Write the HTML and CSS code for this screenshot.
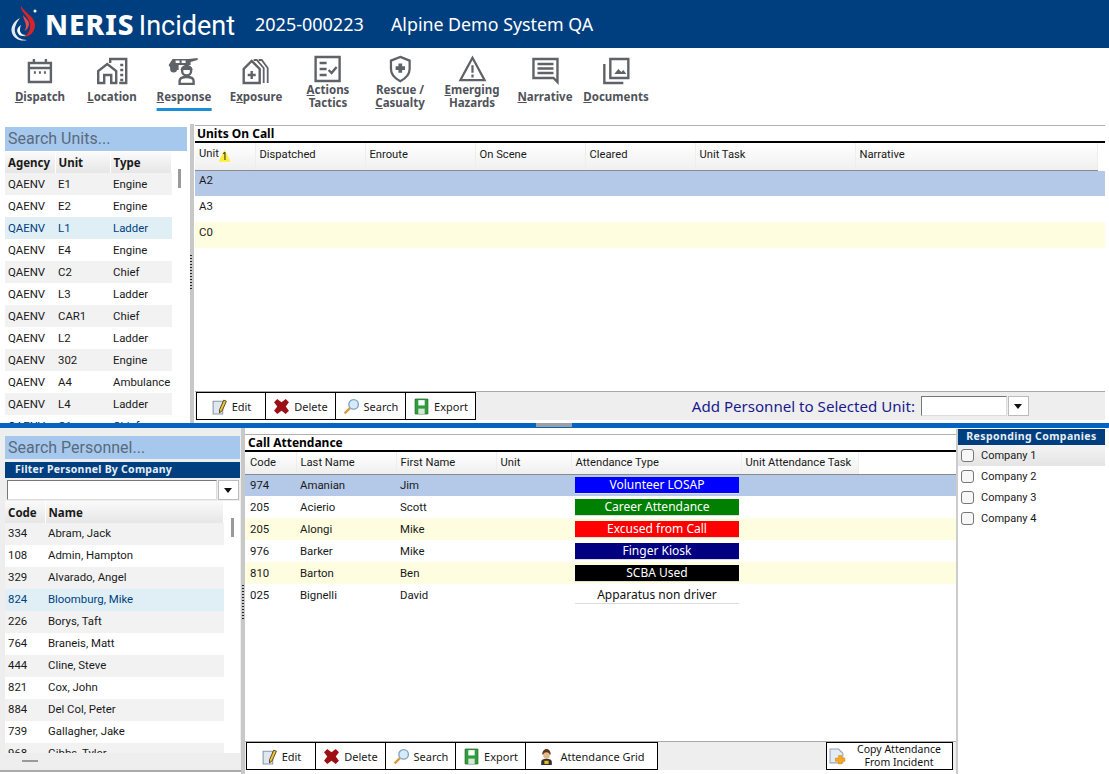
FILE: index.html
```html
<!DOCTYPE html>
<html lang="en">
<head>
    <meta charset="UTF-8">
    <title>NERIS Incident</title>
    <link rel="stylesheet" href="styles.css">
</head>
<body>
    <header class="topbar">
        <svg class="logo" viewBox="0 0 30 40" width="30" height="40">
            <path d="M11 2c-1 6 8 10 9 18 1 6-2 11-7 13 7 0 12-5 12-12C25 13 15 9 11 2z" fill="#d8232a"/>
            <path d="M13 11c0 4 3 7 3 11 0 2-1 4-2 5 3-1 5-4 5-7 0-4-4-6-6-9z" fill="#e8474c"/>
            <path d="M10 14C4 17 0 23 2 29c2 6 9 9 15 7-6 0-11-3-12-8-1-5 2-10 5-14z" fill="#e6e9ee"/>
            <path d="M11 21c-3 2-5 5-3 8 1 3 5 4 8 2-3 0-5-1-6-4 0-2 0-4 1-6z" fill="#fff"/>
            <circle cx="25" cy="7" r="1.500" fill="#fff"/>
        </svg>
        <span class="brand"><b>NERIS</b> <span class="brand-sub">Incident</span></span>
        <span class="incident-no">2025-000223</span>
        <span class="system-name">Alpine Demo System QA</span>
    </header>

    <nav class="tabs">
        <a class="tab tab-dispatch">
            <svg viewBox="0 0 28 28"><path d="M3 6h22v19H3z M3 11h22 M8 2v5 M20 2v5" class="ico"/><path d="M8 15.500h2M13 15.500h2M18 15.500h2" class="ico"/></svg>
            <span><u>D</u>ispatch</span>
        </a>
        <a class="tab tab-location">
            <svg class="icon-wide" viewBox="0 0 32 28"><path d="M2 26V14l9-7 9 7v12h-5v-8H8v8z" class="ico"/><path d="M14 6V2h16v24h-7" class="ico"/><path d="M24 8h3M24 13h3M24 18h3M24 23h3" class="ico"/></svg>
            <span><u>L</u>ocation</span>
        </a>
        <a class="tab tab-response active">
            <svg class="icon-wide" viewBox="0 0 32 28"><path d="M1 8l4-6h16l9-1v2l-7 2v3H11v5H4z" class="solid"/><circle cx="6" cy="12" r="3.500" class="solid"/><rect x="8" y="3.500" width="4" height="2.500" fill="#fff"/><rect x="14" y="3.500" width="4" height="2.500" fill="#fff"/><path d="M13 13c0-3 3-5 6-5s6 2 6 5z" class="solid"/><circle cx="19" cy="14" r="4.500" class="ico"/><path d="M12 27v-3c0-3 3-4 7-4s7 1 7 4v3z" class="ico"/></svg>
            <span><u>R</u>esponse</span>
        </a>
        <a class="tab tab-exposure">
            <svg viewBox="0 0 28 28"><path d="M2 26V12l8-8 8 8v14z" class="ico"/><path d="M10 14v8M6 18h8" class="ico"/><path d="M12 3h3l7 8v15M17 3h3l6 8v15" class="ico thin"/></svg>
            <span>E<u>x</u>posure</span>
        </a>
        <a class="tab tab-actions">
            <svg viewBox="0 0 28 28"><path d="M2 2h24v24H2z" class="ico"/><path d="M6 8h7M6 14h7M6 20h7" class="ico"/><path d="M15 15l3 3 5-6" class="ico"/></svg>
            <span><u>A</u>ctions<br>Tactics</span>
        </a>
        <a class="tab tab-rescue">
            <svg viewBox="0 0 26 30"><path d="M13 2l10 4v9c0 6-4 10-10 13C7 25 3 21 3 15V6z" class="ico"/><path d="M13 9v10M8 14h10" class="ico wide"/></svg>
            <span>Rescue /<br><u>C</u>asualty</span>
        </a>
        <a class="tab tab-hazards">
            <svg viewBox="0 0 30 28"><path d="M15 2L2 26h26z" class="ico"/><path d="M15 10v8M15 20v3" class="ico"/></svg>
            <span><u>E</u>merging<br>Hazards</span>
        </a>
        <a class="tab tab-narrative">
            <svg viewBox="0 0 28 28"><path d="M2 2h24v23l-4-4H2z" class="ico"/><path d="M6 7h16M6 11.500h16M6 16h16" class="ico"/></svg>
            <span><u>N</u>arrative</span>
        </a>
        <a class="tab tab-documents">
            <svg viewBox="0 0 28 28"><path d="M8 2h18v19H8z" class="ico"/><path d="M2 7v19h19" class="ico"/><path d="M12 17l4-5 3 3 2-2 3 4z" class="solid"/></svg>
            <span><u>D</u>ocuments</span>
        </a>
    </nav>

    <section class="upper">
        <aside class="units-side">
            <div class="search-box">Search Units...</div>
            <div class="list-wrap">
                <div class="list">
                    <table class="grid units-list">
                        <thead><tr><th>Agency</th><th>Unit</th><th>Type</th></tr></thead>
                        <tbody>
                            <tr><td>QAENV</td><td>E1</td><td>Engine</td></tr>
                            <tr><td>QAENV</td><td>E2</td><td>Engine</td></tr>
                            <tr class="hot"><td>QAENV</td><td>L1</td><td>Ladder</td></tr>
                            <tr><td>QAENV</td><td>E4</td><td>Engine</td></tr>
                            <tr><td>QAENV</td><td>C2</td><td>Chief</td></tr>
                            <tr><td>QAENV</td><td>L3</td><td>Ladder</td></tr>
                            <tr><td>QAENV</td><td>CAR1</td><td>Chief</td></tr>
                            <tr><td>QAENV</td><td>L2</td><td>Ladder</td></tr>
                            <tr><td>QAENV</td><td>302</td><td>Engine</td></tr>
                            <tr><td>QAENV</td><td>A4</td><td>Ambulance</td></tr>
                            <tr><td>QAENV</td><td>L4</td><td>Ladder</td></tr>
                            <tr><td>QAENV</td><td>C1</td><td>Chief</td></tr>
                        </tbody>
                    </table>
                </div>
                <div class="vscroll vscroll-units"><i></i></div>
            </div>
        </aside>
        <div class="grip grip-units"><i></i></div>
        <div class="panel">
            <h2 class="panel-title">Units On Call</h2>
            <div class="panel-body">
                <table class="grid wide-grid calls">
                    <thead>
                        <tr>
                            <th>Unit <span class="sort-mark">1</span></th>
                            <th>Dispatched</th><th>Enroute</th><th>On Scene</th><th>Cleared</th><th>Unit Task</th><th>Narrative</th><th class="filler"></th>
                        </tr>
                    </thead>
                    <tbody>
                        <tr class="sel"><td>A2</td><td colspan="7"></td></tr>
                        <tr class="plain"><td>A3</td><td colspan="7"></td></tr>
                        <tr class="cream"><td>C0</td><td colspan="7"></td></tr>
                    </tbody>
                </table>
            </div>
            <div class="toolbar">
                <button class="btn"><svg viewBox="0 0 16 16"><use href="#i-edit"/></svg>Edit</button>
                <button class="btn"><svg viewBox="0 0 16 16"><use href="#i-delete"/></svg>Delete</button>
                <button class="btn"><svg viewBox="0 0 16 16"><use href="#i-search"/></svg>Search</button>
                <button class="btn"><svg viewBox="0 0 16 16"><use href="#i-export"/></svg>Export</button>
                <div class="add-personnel">
                    <label>Add Personnel to Selected Unit:</label>
                    <span class="combo combo-small"><span class="combo-input"></span><span class="combo-arrow"></span></span>
                </div>
            </div>
        </div>
    </section>

    <div class="divider"><i></i></div>

    <section class="lower">
        <aside class="people-side">
            <div class="search-box search-people">Search Personnel...</div>
            <div class="filter-title">Filter Personnel By Company</div>
            <span class="combo combo-filter"><span class="combo-input"></span><span class="combo-arrow"></span></span>
            <div class="list-wrap">
                <div class="list">
                    <table class="grid people-list">
                        <thead><tr><th>Code</th><th>Name</th></tr></thead>
                        <tbody>
                            <tr><td>334</td><td>Abram, Jack</td></tr>
                            <tr><td>108</td><td>Admin, Hampton</td></tr>
                            <tr><td>329</td><td>Alvarado, Angel</td></tr>
                            <tr class="hot"><td>824</td><td>Bloomburg, Mike</td></tr>
                            <tr><td>226</td><td>Borys, Taft</td></tr>
                            <tr><td>764</td><td>Braneis, Matt</td></tr>
                            <tr><td>444</td><td>Cline, Steve</td></tr>
                            <tr><td>821</td><td>Cox, John</td></tr>
                            <tr><td>884</td><td>Del Col, Peter</td></tr>
                            <tr><td>739</td><td>Gallagher, Jake</td></tr>
                            <tr><td>968</td><td>Gibbs, Tyler</td></tr>
                        </tbody>
                    </table>
                </div>
                <div class="vscroll vscroll-people"><i></i></div>
            </div>
            <div class="hscroll"><i></i></div>
        </aside>
        <div class="grip grip-people"><i></i></div>
        <div class="panel panel-attendance">
            <h2 class="panel-title">Call Attendance</h2>
            <div class="panel-body">
                <table class="grid wide-grid attendance">
                    <thead>
                        <tr><th>Code</th><th>Last Name</th><th>First Name</th><th>Unit</th><th>Attendance Type</th><th>Unit Attendance Task</th><th class="filler"></th></tr>
                    </thead>
                    <tbody>
                        <tr class="sel"><td>974</td><td>Amanian</td><td>Jim</td><td></td><td><span class="pill pill-blue">Volunteer LOSAP</span></td><td></td><td></td></tr>
                        <tr class="plain"><td>205</td><td>Acierio</td><td>Scott</td><td></td><td><span class="pill pill-green">Career Attendance</span></td><td></td><td></td></tr>
                        <tr class="cream"><td>205</td><td>Alongi</td><td>Mike</td><td></td><td><span class="pill pill-red">Excused from Call</span></td><td></td><td></td></tr>
                        <tr class="plain"><td>976</td><td>Barker</td><td>Mike</td><td></td><td><span class="pill pill-navy">Finger Kiosk</span></td><td></td><td></td></tr>
                        <tr class="cream"><td>810</td><td>Barton</td><td>Ben</td><td></td><td><span class="pill pill-black">SCBA Used</span></td><td></td><td></td></tr>
                        <tr class="plain"><td>025</td><td>Bignelli</td><td>David</td><td></td><td><span class="pill pill-white">Apparatus non driver</span></td><td></td><td></td></tr>
                    </tbody>
                </table>
            </div>
            <div class="toolbar">
                <button class="btn"><svg viewBox="0 0 16 16"><use href="#i-edit"/></svg>Edit</button>
                <button class="btn"><svg viewBox="0 0 16 16"><use href="#i-delete"/></svg>Delete</button>
                <button class="btn"><svg viewBox="0 0 16 16"><use href="#i-search"/></svg>Search</button>
                <button class="btn"><svg viewBox="0 0 16 16"><use href="#i-export"/></svg>Export</button>
                <button class="btn btn-grid"><svg viewBox="0 0 16 16"><use href="#i-person"/></svg>Attendance Grid</button>
                <button class="btn btn-copy"><svg viewBox="0 0 16 16"><use href="#i-copy"/></svg><span>Copy Attendance<br>From Incident</span></button>
            </div>
        </div>
        <aside class="companies">
            <div class="companies-title">Responding Companies</div>
            <label class="company first"><span class="check"></span>Company 1</label>
            <label class="company"><span class="check"></span>Company 2</label>
            <label class="company"><span class="check"></span>Company 3</label>
            <label class="company"><span class="check"></span>Company 4</label>
        </aside>
    </section>

    <!-- toolbar icons -->
    <svg class="icon-defs" width="0" height="0">
        <symbol id="i-edit" viewBox="0 0 16 16">
            <path d="M2 3h9v12H2z" fill="#dfe8f2" stroke="#8a97a6"/>
            <path d="M8 11l4-9 2.500 1-4 9-2.500 2z" fill="#f2c230" stroke="#3a3a20" stroke-width=".8"/>
        </symbol>
        <symbol id="i-delete" viewBox="0 0 16 16">
            <path d="M1 4l3-3 4 3 4-3 3 3-3 4 3 4-3 3-4-3-4 3-3-3 3-4z" fill="#9c1014"/>
        </symbol>
        <symbol id="i-search" viewBox="0 0 16 16">
            <circle cx="10" cy="6" r="4.500" fill="#d6ebfa" stroke="#7fa3c4" stroke-width="1.300"/>
            <path d="M6.500 9.500L1.500 14.500" stroke="#d99a3c" stroke-width="2.200"/>
        </symbol>
        <symbol id="i-export" viewBox="0 0 16 16">
            <path d="M2 1h12v14H2z" fill="#2f9e3a" stroke="#1c6e26" stroke-width=".8"/>
            <path d="M5 2h6v5H5z" fill="#fff"/>
            <path d="M5 10h6v5H5z" fill="#d8e8d8"/>
        </symbol>
        <symbol id="i-person" viewBox="0 0 16 16">
            <path d="M4 6c0-3 2-5 4-5s4 2 4 5z" fill="#5b3a1c"/>
            <circle cx="8" cy="7" r="3" fill="#e2b88c"/>
            <path d="M3 16v-3c0-2 2-3 5-3s5 1 5 3v3z" fill="#33322a"/>
            <path d="M6 12h4v3H6z" fill="#e5bf2e"/>
        </symbol>
        <symbol id="i-copy" viewBox="0 0 16 16">
            <path d="M1 1h8l4 4v9H1z" fill="#e3ecf6" stroke="#9aa5b1"/>
            <path d="M9 7h3v2.500h3v3h-3V15H9v-2.500H6v-3h3z" fill="#f8a81c" stroke="#d9860a" stroke-width=".5"/>
        </symbol>
    </svg>
</body>
</html>
```
FILE: styles.css
```css
* {
    box-sizing: border-box;
}
html, body {
    margin: 0;
    height: 774px;
    overflow: hidden;
}
body {
    font-family: "Noto Sans", Tahoma, sans-serif;
    font-size: 11.5px;
    background-color: #fff;
    color: #1a1a1a;
    display: flex;
    flex-direction: column;
}
.icon-defs {
    position: absolute;
}

/* Header */
.topbar {
    height: 48px;
    background-color: #003f7f;
    color: #fff;
    display: flex;
    align-items: center;
    padding-left: 10px;
    flex: none;
}
.logo {
    margin-right: 5px;
}
.brand {
    font-size: 28px;
    width: 210px;
    white-space: nowrap;
}
.brand b {
    font-weight: 800;
    letter-spacing: 1px;
}
.brand-sub {
    font-family: Roboto, sans-serif;
    font-size: 27px;
    font-weight: 400;
    margin-left: -3px;
}
.incident-no {
    font-size: 18px;
    width: 136px;
}
.system-name {
    font-size: 17.800px;
}

/* Tabs */
.tabs {
    height: 76px;
    flex: none;
    display: flex;
    background-color: #fff;
    position: relative;
}
.tab {
    position: absolute;
    top: 9px;
    display: flex;
    flex-direction: column;
    align-items: center;
    color: #50535a;
    font-weight: 700;
    font-size: 11.500px;
    line-height: 13px;
    text-align: center;
    transform: translateX(-50%);
    white-space: nowrap;
}
.tab svg {
    width: 28px;
    height: 28px;
    margin-bottom: 5px;
}
.tab .icon-wide {
    width: 32px;
}
.tab-dispatch { left: 40px; }
.tab-location { left: 112px; }
.tab-response { left: 184px; }
.tab-exposure { left: 256px; }
.tab-actions { left: 328px; }
.tab-rescue { left: 400px; }
.tab-hazards { left: 472px; }
.tab-narrative { left: 545px; }
.tab-documents { left: 616px; }
.tab-actions svg, .tab-rescue svg, .tab-hazards svg {
    margin-bottom: 0;
}
.tab-actions, .tab-rescue, .tab-hazards {
    top: 7px;
}
.tab.active {
    border-bottom: 3px solid #1a8fd8;
    padding-bottom: 5px;
}
.ico {
    fill: none;
    stroke: #5f6368;
    stroke-width: 2.400;
}
.ico.thin {
    stroke-width: 1.800;
}
.ico.wide {
    stroke-width: 4;
}
.solid {
    fill: #5f6368;
}

/* Upper / lower layouts */
.upper {
    height: 299px;
    flex: none;
    display: flex;
    background-color: #fff;
}
.lower {
    flex: 1;
    display: flex;
    min-height: 0;
}
.divider {
    height: 5px;
    flex: none;
    background-color: #0563c1;
    display: flex;
    justify-content: center;
}
.divider i {
    width: 36px;
    height: 4px;
    background-color: #9aa0a6;
    margin-left: -1px;
}

/* Side lists */
.units-side {
    width: 190px;
    flex: none;
    padding: 3px 3px 0 5px;
    display: flex;
    flex-direction: column;
    overflow: hidden;
}
.people-side {
    width: 241px;
    flex: none;
    padding: 8px 1px 0 5px;
    display: flex;
    flex-direction: column;
    overflow: hidden;
    border-bottom: 2px solid #aaa;
    margin-bottom: 2px;
    background-color: #eee;
}
.search-box {
    height: 24px;
    background-color: #a6c8ed;
    color: #5a6a7d;
    font-family: Roboto, sans-serif;
    font-size: 16px;
    line-height: 23px;
    padding-left: 3px;
    flex: none;
}
.search-people {
    height: 23px;
}
.filter-title {
    margin-top: 3px;
    height: 16px;
    background-color: #003f7f;
    color: #e8eef6;
    font-size: 10.500px;
    font-weight: 700;
    letter-spacing: .25px;
    line-height: 15px;
    padding-left: 10px;
    flex: none;
}
.list-wrap {
    flex: 1;
    display: flex;
    min-height: 0;
    margin-top: 1px;
    background-color: #fff;
}
.list {
    flex: 1;
    overflow: hidden;
    min-width: 0;
}
.vscroll {
    flex: none;
    background-color: #fff;
    display: flex;
    justify-content: center;
    align-items: flex-start;
}
.vscroll i {
    width: 3px;
    height: 19px;
    background-color: #9a9a9a;
}
.vscroll-units {
    width: 15px;
}
.vscroll-units i {
    margin-top: 17px;
}
.vscroll-people {
    width: 16px;
}
.vscroll-people i {
    margin-top: 17px;
}
.hscroll {
    height: 17px;
    flex: none;
    background-color: #eee;
    padding: 7px 0 0 17px;
}
.hscroll i {
    display: block;
    width: 16px;
    height: 2px;
    background-color: #9a9a9a;
}

/* Splitter grips */
.grip {
    width: 4px;
    flex: none;
    background-color: #c8c8c8;
}
.grip i {
    display: block;
    width: 2px;
    height: 36px;
    background: repeating-linear-gradient(#222 0 1px, transparent 1px 3px);
}
.grip-units i {
    margin-top: 131px;
}
.grip-people i {
    margin: 157px 0 0 1px;
}

/* Grids */
.grid {
    width: 100%;
    border-collapse: collapse;
    table-layout: fixed;
    font-size: 11.400px;
}
.grid th {
    height: 21px;
    padding: 0 3px;
    text-align: left;
    font-size: 11.500px;
    font-weight: 700;
    background: linear-gradient(#fafafa, #e6e6e6);
    border-right: 1px solid #fff;
    white-space: nowrap;
    overflow: hidden;
}
.grid td {
    height: 22px;
    padding: 0 3px 2px;
    font-family: Roboto, sans-serif;
    white-space: nowrap;
    overflow: hidden;
}
.units-list th:nth-child(1) { width: 50px; }
.units-list th:nth-child(2) { width: 55px; }
.units-list td {
    padding-bottom: 0;
}
.units-list tbody tr:nth-child(odd),
.people-list tbody tr:nth-child(odd) {
    background-color: #f2f2f2;
}
.units-list tbody tr:nth-child(even),
.people-list tbody tr:nth-child(even) {
    background-color: #fff;
}
.units-list tbody tr.hot,
.people-list tbody tr.hot {
    background-color: #e0eff6;
    color: #003f7f;
}
.people-list th:nth-child(1) { width: 40px; }
.people-list th { height: 22px; }

/* Panels */
.panel {
    flex: 1;
    min-width: 0;
    display: flex;
    flex-direction: column;
    border-top: 1px solid #b0b0b0;
    margin: 1px 4px 3px 1px;
    background-color: #fff;
}
.panel-title {
    margin: 0;
    height: 17px;
    font-size: 12px;
    font-weight: 700;
    line-height: 15px;
    color: #000;
    padding-left: 2px;
    border-bottom: 2px solid #000;
    flex: none;
}
.panel-body {
    flex: 1;
    min-height: 0;
    overflow: hidden;
}
.wide-grid th {
    font-family: Roboto, sans-serif;
    font-size: 11.200px;
    font-weight: 400;
    background: linear-gradient(#fff, #efefef);
    border-bottom: 1px solid #8a8a8a;
    padding-left: 4px;
    border-right: 1px solid #eee;
}
.wide-grid .filler {
    background: #fff;
    border: 0;
}
.calls th {
    height: 27px;
    padding-bottom: 4px;
}
.calls td {
    height: 26px;
    padding-left: 4px;
    padding-bottom: 6px;
}
.calls th:nth-child(1) { width: 60px; }
.calls th:nth-child(2),
.calls th:nth-child(3),
.calls th:nth-child(4),
.calls th:nth-child(5) { width: 110px; }
.calls th:nth-child(6) { width: 160px; }
.calls th:nth-child(7) { width: 242px; }
.sel { background-color: #b4c9e8; }
.cream { background-color: #fefde0; }
.plain { background-color: #fff; }
.sort-mark {
    display: inline-block;
    width: 12px;
    height: 12px;
    margin-left: -3px;
    font-size: 10px;
    line-height: 13px;
    text-align: center;
    vertical-align: -3px;
    background-color: #ffef3a;
    clip-path: polygon(50% 0, 100% 100%, 0 100%);
    color: #111;
}
.attendance {
    background-color: #fff;
}
.panel-attendance {
    margin: 6px 0 4px 0;
    flex: none;
    width: 711px;
}
.panel-attendance .panel-title {
    padding-left: 3px;
}
.attendance th {
    height: 22px;
    padding-left: 4px;
}
.attendance td {
    padding-left: 4px;
    padding-bottom: 0;
}
.attendance th:nth-child(1) { width: 51px; }
.attendance th:nth-child(1),
.attendance td:nth-child(1) { padding-left: 5px; }
.attendance th:nth-child(2) { width: 100px; }
.attendance th:nth-child(3) { width: 100px; }
.attendance th:nth-child(4) { width: 75px; }
.attendance th:nth-child(5) { width: 170px; }
.attendance th:nth-child(6) { width: 117px; }
.attendance .filler {
    border-bottom: 1px solid #8a8a8a;
}
.attendance td:nth-child(5) {
    padding: 0 0 0 4px;
}
.pill {
    display: block;
    width: 164px;
    height: 17px;
    line-height: 16px;
    font-family: "Noto Sans", sans-serif;
    text-align: center;
    font-size: 12px;
    color: #fff;
    border-bottom: 1px solid #ddd;
}
.pill-blue { background-color: #0000ff; }
.pill-green { background-color: #008000; }
.pill-red { background-color: #ff0000; }
.pill-navy { background-color: #000080; }
.pill-black { background-color: #000; }
.pill-white { background-color: #fff; color: #111; }

/* Toolbars */
.toolbar {
    height: 29px;
    flex: none;
    display: flex;
    align-items: stretch;
    background-color: #eee;
    border-top: 1px solid #a8a8a8;
    padding: 0 3px 0 1px;
}
.btn {
    width: 70px;
    flex: none;
    font: inherit;
    font-size: 11px;
    color: #1a1a1a;
    background-color: #fff;
    border: 1px solid #000;
    border-left-width: 0;
    display: flex;
    align-items: center;
    justify-content: center;
    gap: 4px;
    padding: 0;
    height: 28px;
}
.btn:first-child {
    border-left-width: 1px;
}
.btn svg {
    width: 17px;
    height: 17px;
    flex: none;
}
.btn-grid {
    width: 132px;
    gap: 5px;
}
.btn-copy {
    width: 127px;
    margin-left: auto;
    border-left-width: 1px;
    font-size: 10.500px;
    line-height: 13px;
    color: #111;
    justify-content: flex-start;
    padding-left: 2px;
    gap: 0;
}
.btn-copy span {
    flex: 1;
    text-align: center;
}
.add-personnel {
    margin-left: auto;
    display: flex;
    align-items: center;
    gap: 6px;
    color: #1a1a8c;
    font-size: 15.100px;
    padding-right: 73px;
}

/* Combos */
.combo {
    display: flex;
    flex: none;
}
.combo-input {
    display: block;
    background-color: #fff;
    border: 1px solid #dcdcdc;
    border-left-color: #777;
    border-top-color: #777;
    flex: 1;
}
.combo-arrow {
    display: block;
    position: relative;
    width: 21px;
    background-color: #fff;
    border: 1px solid #bbb;
    margin-left: 1px;
}
.combo-arrow::after {
    content: "";
    position: absolute;
    left: 5px;
    top: 7px;
    border-left: 4px solid transparent;
    border-right: 4px solid transparent;
    border-top: 5px solid #111;
}
.combo-small {
    width: 108px;
    height: 20px;
}
.combo-filter {
    height: 20px;
    margin: 2px 1px 0 2px;
}

/* Responding companies */
.companies {
    flex: 1;
    min-width: 0;
    margin: 1px 4px 0 0;
    border-left: 2px solid #ccc;
    background-color: #fff;
}
.companies-title {
    height: 16px;
    background-color: #003f7f;
    color: #e8eef6;
    font-size: 10.500px;
    font-weight: 700;
    letter-spacing: .4px;
    line-height: 15px;
    text-align: center;
}
.company {
    height: 21px;
    display: flex;
    align-items: center;
    gap: 7px;
    padding-left: 3px;
    font-family: Roboto, sans-serif;
    font-size: 11px;
}
.company.first {
    background: linear-gradient(#f4f4f4, #e4e4e4);
}
.check {
    width: 13px;
    height: 13px;
    border: 1px solid #777;
    border-radius: 3px;
    background-color: #f7f7f7;
}
```
